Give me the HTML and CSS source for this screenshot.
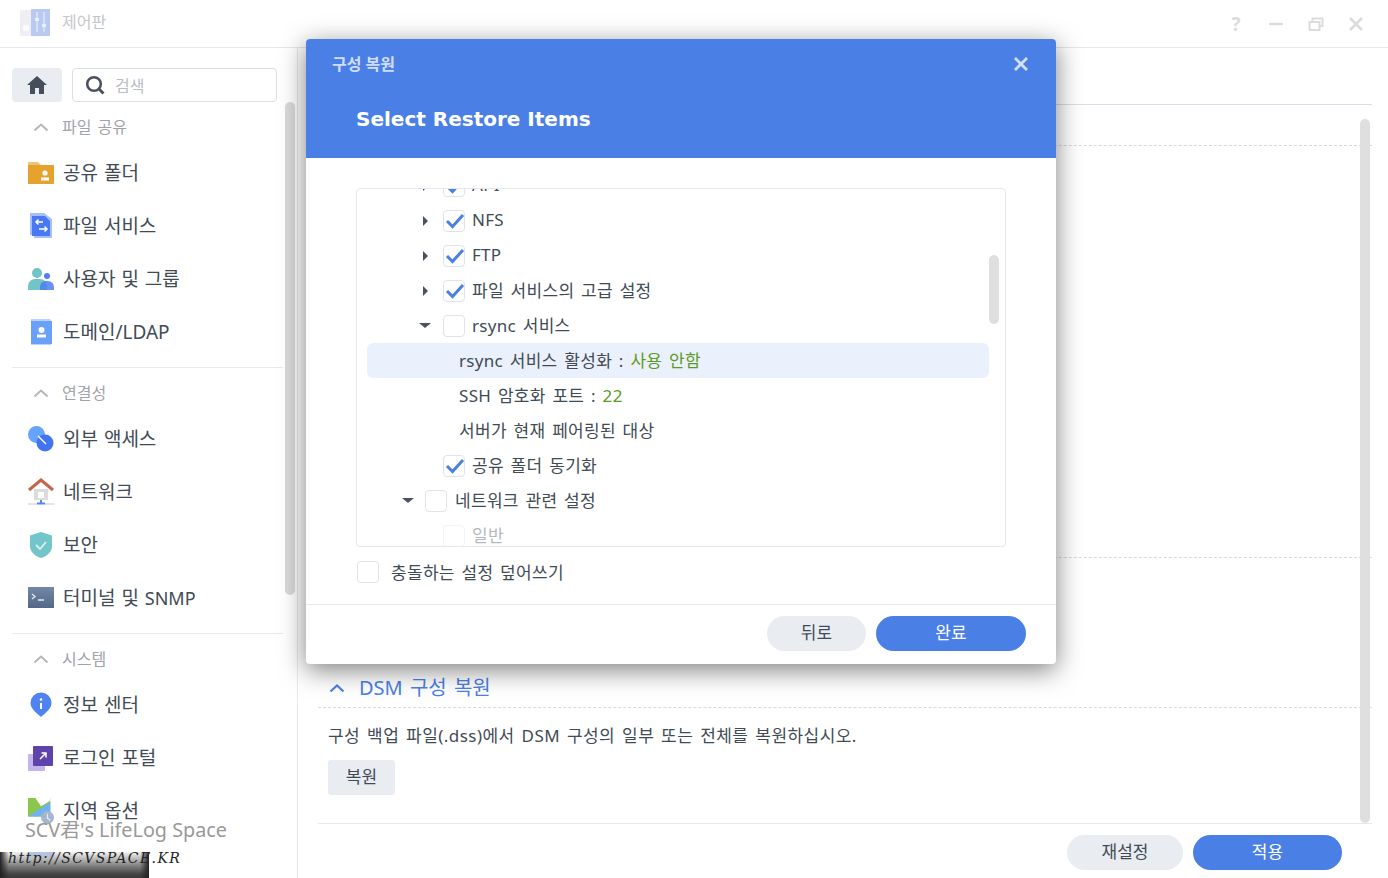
FILE: index.html
```html
<!DOCTYPE html>
<html lang="ko">
<head>
  <meta charset="UTF-8" />
  <title>제어판</title>
  <link rel="stylesheet" href="styles.css">
</head>
<body>
  <div class="app">
    <header class="titlebar">
      <svg class="app-icon" width="30" height="28" viewBox="0 0 30 28">
        <rect x="0" y="1" width="13" height="26" rx="2" fill="#eeeef3"/>
        <rect x="11" y="0" width="19" height="27" rx="1" fill="#b9c9f1"/>
        <circle cx="6" cy="19" r="3.5" fill="#fafafa"/>
        <path d="M17 3v20M24 3v20" stroke="#dfe6f8" stroke-width="1.5"/>
        <rect x="15" y="9" width="4" height="3" fill="#e8eefb"/>
        <rect x="22" y="15" width="4" height="3" fill="#e8eefb"/>
      </svg>
      <span class="app-title">제어판</span>
      <div class="win-btns">
        <span class="win-help">?</span>
        <svg width="16" height="16" viewBox="0 0 16 16"><path d="M1 8h14" stroke="#dcdcdc" stroke-width="2.4"/></svg>
        <svg width="16" height="16" viewBox="0 0 16 16"><path d="M1.5 6h10v8h-10zM4.5 5V2.5h10V10h-2" fill="none" stroke="#dcdcdc" stroke-width="2"/></svg>
        <svg width="16" height="16" viewBox="0 0 16 16"><path d="M2 2l12 12M14 2L2 14" stroke="#dcdcdc" stroke-width="2.6"/></svg>
      </div>
    </header>

    <div class="content">
      <aside class="sidebar">
        <div class="search-row">
          <button class="home-btn">
            <svg width="20" height="18" viewBox="0 0 20 18"><path d="M10 0L0 9h3v9h5v-6h4v6h5V9h3z" fill="#464e5c"/></svg>
          </button>
          <div class="search-box">
            <svg width="20" height="20" viewBox="0 0 20 20"><circle cx="9" cy="9" r="6.8" fill="none" stroke="#4a5260" stroke-width="2.6"/><path d="M14 14l4.5 4.5" stroke="#4a5260" stroke-width="2.8"/></svg>
            <span>검색</span>
          </div>
        </div>

        <section class="group">
          <div class="group-title">
            <svg class="chev" width="16" height="10" viewBox="0 0 16 10"><path d="M1.5 8.5L8 2.5l6.5 6" fill="none" stroke="#b4b6ba" stroke-width="2"/></svg>
            <span>파일 공유</span>
          </div>
          <div class="item">
            <svg width="26" height="24" viewBox="0 0 26 24"><path d="M0 2a1 1 0 0 1 1-1h9l3 3H0z" fill="#efc477"/><rect x="0" y="4" width="26" height="19" fill="#e5a32e"/><circle cx="17" cy="12" r="2.6" fill="#fff"/><rect x="13" y="16.500" width="8" height="3" fill="#fff"/></svg>
            <span>공유 폴더</span>
          </div>
          <div class="item">
            <svg width="26" height="26" viewBox="0 0 26 26"><path d="M2 0h14l8 6v19H6v-3H2z" fill="#a9bffb"/><path d="M4 3h13l5 5v15H4z" fill="#4878f4"/><path d="M15 9H8M10.500 6.500L8 9l2.500 2.500M11 16h8M16.500 13.500L19 16l-2.500 2.500" fill="none" stroke="#fff" stroke-width="1.5"/></svg>
            <span>파일 서비스</span>
          </div>
          <div class="item">
            <svg width="26" height="24" viewBox="0 0 26 24"><circle cx="9" cy="6" r="5" fill="#71c5c8"/><path d="M0 23v-4a7 7 0 0 1 7-7h5a7 7 0 0 1 7 7v4z" fill="#71c5c8"/><circle cx="19" cy="9" r="3" fill="#4f7ff2"/><path d="M12 23v-3a6 6 0 0 1 5-6h3a6 6 0 0 1 6 6v3z" fill="#4f7ff2" opacity=".85"/></svg>
            <span>사용자 및 그룹</span>
          </div>
          <div class="item">
            <svg width="24" height="26" viewBox="0 0 24 26"><path d="M2 0h19l1 2v24H2z" fill="#b9d1fd"/><rect x="2" y="2" width="21" height="23" fill="#69a0fa"/><circle cx="12.500" cy="11" r="3" fill="#fff"/><rect x="8" y="15.500" width="9" height="3" fill="#fff"/></svg>
            <span>도메인/LDAP</span>
          </div>
        </section>

        <section class="group">
          <div class="group-title">
            <svg class="chev" width="16" height="10" viewBox="0 0 16 10"><path d="M1.5 8.5L8 2.500l6.500 6" fill="none" stroke="#b4b6ba" stroke-width="2"/></svg>
            <span>연결성</span>
          </div>
          <div class="item">
            <svg width="26" height="26" viewBox="0 0 26 26"><circle cx="8.500" cy="8.500" r="8.500" fill="#66a3fb"/><circle cx="17" cy="17" r="8.500" fill="#4274ef"/><path d="M10 10l8 8" stroke="#fff" stroke-width="1.500"/></svg>
            <span>외부 액세스</span>
          </div>
          <div class="item">
            <svg width="26" height="28" viewBox="0 0 26 28"><rect x="6" y="11" width="14" height="11" fill="#dcdcdc"/><rect x="10" y="14" width="6" height="6" fill="#fff"/><path d="M1 12L13 2l12 10" fill="none" stroke="#c5654c" stroke-width="3"/><path d="M13 22v3" stroke="#5087f2" stroke-width="2"/><path d="M9 25.500h8" stroke="#5087f2" stroke-width="2"/><path d="M0 26h9M17 26h9" stroke="#dcdcdc" stroke-width="1.500"/></svg>
            <span>네트워크</span>
          </div>
          <div class="item">
            <svg width="24" height="26" viewBox="0 0 24 26"><path d="M12 0l11 3.500V14c0 6-5 10-11 12C6 24 1 20 1 14V3.500z" fill="#72c5c9"/><path d="M7 13l4 4 6-7" fill="none" stroke="#d9f1f1" stroke-width="1.800"/></svg>
            <span>보안</span>
          </div>
          <div class="item">
            <svg width="26" height="22" viewBox="0 0 26 22"><defs><linearGradient id="term" x1="0" y1="0" x2="0" y2="1"><stop offset="0" stop-color="#7387a6"/><stop offset="1" stop-color="#536789"/></linearGradient></defs><rect width="26" height="21" fill="url(#term)"/><path d="M4 7l3 2.500L4 12" fill="none" stroke="#e6eaf2" stroke-width="1.300"/><path d="M10 13h6" stroke="#e6eaf2" stroke-width="1.500"/></svg>
            <span>터미널 및 <b class="latin">SNMP</b></span>
          </div>
        </section>

        <section class="group">
          <div class="group-title">
            <svg class="chev" width="16" height="10" viewBox="0 0 16 10"><path d="M1.5 8.5L8 2.500l6.500 6" fill="none" stroke="#b4b6ba" stroke-width="2"/></svg>
            <span>시스템</span>
          </div>
          <div class="item">
            <svg width="26" height="26" viewBox="0 0 26 26"><path d="M13 25C9 21 2.500 17 2.500 11a10.500 10.500 0 0 1 21 0c0 6-6.500 10-10.500 14z" fill="#4f83f4"/><circle cx="13" cy="7.500" r="1.300" fill="#fff"/><path d="M13 11v6" stroke="#fff" stroke-width="2"/></svg>
            <span>정보 센터</span>
          </div>
          <div class="item">
            <svg width="26" height="26" viewBox="0 0 26 26"><rect x="0" y="9" width="17" height="17" rx="1" fill="#c3b4ef"/><rect x="5" y="1" width="20" height="20" rx="1" fill="#5f42ac"/><path d="M12 14l6-6M13.500 8H18v4.500" fill="none" stroke="#fff" stroke-width="1.500"/></svg>
            <span>로그인 포털</span>
          </div>
          <div class="item">
            <svg width="28" height="30" viewBox="0 0 28 30"><path d="M0 1h24v20H0z" fill="#8cc64a"/><path d="M8 1h16v3L14 10z" fill="#fff"/><path d="M0 21L24 5v16z" fill="#6fb2ee"/><circle cx="21" cy="22" r="7" fill="#a6b6cf"/><path d="M21 18v5l3 2" fill="none" stroke="#e8edf5" stroke-width="1.300"/></svg>
            <span>지역 옵션</span>
          </div>
          <div class="item">
            <svg width="26" height="24" viewBox="0 0 26 24"><rect width="26" height="24" rx="2" fill="#a9c5fb"/></svg>
          </div>
        </section>

        <div class="side-scroll"></div>
      </aside>

      <main class="main">
        <div class="tabbar"></div>
        <div class="panel">
          <div class="panel-scroll">
            <div class="block block-top"></div>
            <div class="block block-mid"></div>
            <div class="block block-dsm">
              <svg width="16" height="10" viewBox="0 0 16 10"><path d="M1.500 8.500L8 2.500l6.500 6" fill="none" stroke="#4a80e6" stroke-width="2.200"/></svg>
              <span>DSM 구성 복원</span>
            </div>
            <p class="desc">구성 백업 파일(.dss)에서 DSM 구성의 일부 또는 전체를 복원하십시오.</p>
            <button class="btn-small">복원</button>
          </div>
          <div class="main-scroll"></div>
        </div>
        <footer class="main-foot">
          <button class="pill pill-gray pill-reset">재설정</button>
          <button class="pill pill-blue pill-apply">적용</button>
        </footer>
      </main>
    </div>
  </div>

  <div class="dialog">
    <div class="dlg-head">
      <div class="dlg-title">구성 복원</div>
      <svg class="dlg-close" width="16" height="16" viewBox="0 0 16 16"><path d="M2 2l12 12M14 2L2 14" stroke="#d5e0f8" stroke-width="2.800"/></svg>
      <h2>Select Restore Items</h2>
    </div>
    <div class="dlg-body">
      <div class="tree">
        <div class="tree-list">
          <div class="row lv2"><i class="arrow right"></i><i class="cb"><svg width="22" height="22" viewBox="0 0 22 22"><path d="M4 11l5.500 5.500L20 5" fill="none" stroke="#4a80e6" stroke-width="3"/></svg></i><span>API</span></div>
          <div class="row lv2"><i class="arrow right"></i><i class="cb"><svg width="22" height="22" viewBox="0 0 22 22"><path d="M4 11l5.500 5.500L20 5" fill="none" stroke="#4a80e6" stroke-width="3"/></svg></i><span>NFS</span></div>
          <div class="row lv2"><i class="arrow right"></i><i class="cb"><svg width="22" height="22" viewBox="0 0 22 22"><path d="M4 11l5.500 5.500L20 5" fill="none" stroke="#4a80e6" stroke-width="3"/></svg></i><span>FTP</span></div>
          <div class="row lv2"><i class="arrow right"></i><i class="cb"><svg width="22" height="22" viewBox="0 0 22 22"><path d="M4 11l5.500 5.500L20 5" fill="none" stroke="#4a80e6" stroke-width="3"/></svg></i><span>파일 서비스의 고급 설정</span></div>
          <div class="row lv2"><i class="arrow down"></i><i class="cb"></i><span>rsync 서비스</span></div>
          <div class="row leaf active"><span>rsync 서비스 활성화 : <em>사용 안함</em></span></div>
          <div class="row leaf"><span>SSH 암호화 포트 : <em>22</em></span></div>
          <div class="row leaf"><span>서버가 현재 페어링된 대상</span></div>
          <div class="row lv2"><i class="arrow"></i><i class="cb"><svg width="22" height="22" viewBox="0 0 22 22"><path d="M4 11l5.500 5.500L20 5" fill="none" stroke="#4a80e6" stroke-width="3"/></svg></i><span>공유 폴더 동기화</span></div>
          <div class="row lv1"><i class="arrow down"></i><i class="cb"></i><span>네트워크 관련 설정</span></div>
          <div class="row lv2 dim"><i class="arrow"></i><i class="cb"></i><span>일반</span></div>
        </div>
        <div class="tree-scroll"></div>
      </div>
      <div class="overwrite"><i class="cb"></i><span>충돌하는 설정 덮어쓰기</span></div>
    </div>
    <div class="dlg-foot">
      <button class="pill pill-gray pill-back">뒤로</button>
      <button class="pill pill-blue pill-done">완료</button>
    </div>
  </div>

  <div class="watermark">
    <div class="wm-title">SCV君's LifeLog Space</div>
    <div class="wm-strip"></div>
    <div class="wm-url">http://SCVSPACE.KR</div>
  </div>
</body>
</html>
```

FILE: styles.css
```css
* {
  box-sizing: border-box;
}
html, body {
  margin: 0;
  padding: 0;
  height: 878px;
  overflow: hidden;
}
body {
  position: relative;
  background-color: #ffffff;
  color: #414b55;
  font-family: "Noto Sans", "Noto Sans CJK KR", sans-serif;
  font-size: 17px;
}
button {
  font-family: inherit;
  border: none;
  padding: 0;
}
.app {
  display: flex;
  flex-direction: column;
  height: 878px;
}

/* title bar */
.titlebar {
  display: flex;
  align-items: center;
  height: 48px;
  padding-left: 20px;
  border-bottom: 1px solid #e6e8ee;
  flex: none;
}
.app-icon {
  margin: 0 12px 2px 0;
}
.app-title {
  padding-bottom: 6px;
  font-size: 16px;
  color: #c4c6c9;
}
.win-btns {
  display: flex;
  align-items: center;
  gap: 24px;
  margin-left: auto;
  padding-right: 24px;
}
.win-help {
  width: 16px;
  text-align: center;
  font-size: 19px;
  font-weight: bold;
  line-height: 16px;
  color: #dcdcdc;
}

.content {
  display: flex;
  flex: 1;
  min-height: 0;
}

/* sidebar */
.sidebar {
  position: relative;
  width: 298px;
  flex: none;
  padding: 20px 15px 0 12px;
  border-right: 1px solid #e6e8ee;
  overflow: hidden;
}
.search-row {
  display: flex;
  gap: 10px;
  width: 265px;
  margin-bottom: 8px;
}
.home-btn {
  display: flex;
  align-items: center;
  justify-content: center;
  width: 50px;
  height: 34px;
  background-color: #e9ecf1;
  border-radius: 4px;
}
.search-box {
  display: flex;
  align-items: center;
  gap: 10px;
  width: 205px;
  height: 34px;
  padding-left: 12px;
  font-size: 16px;
  color: #b9bdc4;
  border: 1px solid #d9dfe9;
  border-radius: 4px;
}
.group {
  width: 271px;
  padding-bottom: 9px;
  border-bottom: 1px solid #e8eaee;
  margin-bottom: 8px;
}
.group-title {
  display: flex;
  align-items: center;
  height: 34px;
  margin-bottom: 2px;
  padding-left: 21px;
  font-size: 16px;
  word-spacing: 2px;
  color: #a0a4aa;
}
.group-title span {
  padding-bottom: 2px;
}
.chev {
  margin-right: 13px;
}
.item {
  display: flex;
  align-items: center;
  height: 53px;
  padding-left: 16px;
  font-size: 19px;
  word-spacing: 1px;
}
.item svg {
  width: 26px;
  flex: none;
}
.item span {
  margin-left: 9px;
  padding-bottom: 2px;
}
.latin {
  font-weight: normal;
  font-size: 18px;
}
.side-scroll {
  position: absolute;
  top: 54px;
  left: 285px;
  width: 10px;
  height: 493px;
  background-color: #d9d9d9;
  border-radius: 5px;
}

/* main panel */
.main {
  display: flex;
  flex-direction: column;
  flex: 1;
  min-width: 0;
  padding: 0 16px 0 20px;
}
.tabbar {
  height: 57px;
  flex: none;
  border-bottom: 1px solid #d8dde9;
}
.panel {
  position: relative;
  flex: 1;
  min-height: 0;
}
.block {
  border-bottom: 1px dashed #d9d9d9;
}
.block-top {
  height: 41px;
}
.block-mid {
  height: 412px;
}
.block-dsm {
  display: flex;
  align-items: center;
  height: 150px;
  padding: 110px 0 0 11px;
  font-size: 20px;
  color: #4a80e6;
}
.block-dsm span {
  margin-left: 14px;
  padding-bottom: 2px;
  word-spacing: 2px;
}
.desc {
  margin: 16px 0 12px 10px;
  line-height: 24px;
  font-size: 17px;
  letter-spacing: .45px;
  word-spacing: 2px;
}
.btn-small {
  display: block;
  width: 67px;
  height: 35px;
  margin-left: 10px;
  padding-bottom: 4px;
  font-size: 17px;
  color: #414b55;
  background-color: #e9ecf1;
  border-radius: 3px;
}
.main-scroll {
  position: absolute;
  top: 14px;
  right: 2px;
  width: 10px;
  height: 704px;
  background-color: #dfdfdf;
  border-radius: 5px;
}
.main-foot {
  display: flex;
  justify-content: flex-end;
  gap: 10px;
  height: 55px;
  flex: none;
  padding: 11px 30px 0 0;
  border-top: 1px solid #e6e8ee;
}
.pill {
  height: 35px;
  padding-bottom: 4px;
  font-size: 17px;
  border-radius: 18px;
}
.pill-gray {
  background-color: #e9ecf1;
  color: #414b55;
}
.pill-blue {
  background-color: #4a80e6;
  color: #ffffff;
}
.pill-reset { width: 116px; }
.pill-apply { width: 149px; }
.pill-back { width: 99px; }
.pill-done { width: 150px; }

/* dialog */
.dialog {
  position: absolute;
  top: 39px;
  left: 306px;
  display: flex;
  flex-direction: column;
  width: 750px;
  height: 625px;
  background-color: #ffffff;
  border-radius: 4px;
  box-shadow: 0 6px 26px rgba(0, 0, 0, .5);
}
.dlg-head {
  position: relative;
  height: 119px;
  flex: none;
  padding: 13px 0 0 26px;
  background-color: #4a80e6;
  border-radius: 4px 4px 0 0;
}
.dlg-title {
  line-height: 24px;
  font-size: 16px;
  font-weight: bold;
  color: #d0ddf8;
}
.dlg-close {
  position: absolute;
  top: 17px;
  right: 27px;
}
.dlg-head h2 {
  margin: 28px 0 0 24px;
  line-height: 30px;
  font-family: "DejaVu Sans", sans-serif;
  font-size: 20px;
  font-weight: bold;
  color: #ffffff;
}
.dlg-body {
  flex: 1;
  padding: 30px 50px 0;
}
.tree {
  position: relative;
  height: 359px;
  border: 1px solid #e4e7ef;
  border-radius: 4px;
  overflow: hidden;
}
.tree-list {
  margin-top: -21px;
}
.row {
  display: flex;
  align-items: center;
  height: 35px;
  margin-left: 10px;
  width: 622px;
  letter-spacing: .3px;
  word-spacing: 2px;
}
.row span {
  padding-bottom: 2px;
}
.lv2 { padding-left: 51px; }
.lv1 { padding-left: 34px; }
.lv1 .arrow { margin-right: 10px; }
.lv1 .cb { margin-right: 8px; }
.leaf {
  padding-left: 92px;
}
.active {
  background-color: #eaf0fc;
  border-radius: 6px;
}
.row em {
  font-style: normal;
  color: #5d9a1f;
}
.dim {
  opacity: .4;
}
.arrow {
  position: relative;
  width: 14px;
  height: 14px;
  flex: none;
  margin-right: 11px;
}
.arrow::after {
  content: "";
  position: absolute;
  width: 0;
  height: 0;
}
.arrow.right::after {
  top: 2px;
  left: 5px;
  border-left: 5px solid #4a5260;
  border-top: 5px solid transparent;
  border-bottom: 5px solid transparent;
}
.arrow.down::after {
  top: 4px;
  left: 1px;
  border-top: 5px solid #4a5260;
  border-left: 6px solid transparent;
  border-right: 6px solid transparent;
}
.cb {
  position: relative;
  display: block;
  width: 22px;
  height: 22px;
  flex: none;
  margin-right: 7px;
  background-color: #ffffff;
  border: 1px solid #dfe3ec;
  border-radius: 4px;
}
.cb svg {
  position: absolute;
  top: -1px;
  left: -1px;
}
.tree-scroll {
  position: absolute;
  top: 66px;
  right: 6px;
  width: 10px;
  height: 69px;
  background-color: #dfdfdf;
  border-radius: 5px;
}
.overwrite {
  display: flex;
  align-items: center;
  height: 22px;
  margin: 14px 0 0 1px;
  letter-spacing: .3px;
  word-spacing: 2px;
}
.overwrite span {
  margin-left: 5px;
  padding-bottom: 2px;
}
.dlg-foot {
  display: flex;
  justify-content: flex-end;
  gap: 10px;
  height: 60px;
  flex: none;
  padding: 11px 30px 0 0;
  border-top: 1px solid #e4e7ef;
}

/* watermark */
.watermark {
  position: absolute;
  left: 0;
  bottom: 0;
  width: 240px;
  height: 62px;
}
.wm-title {
  margin-left: 25px;
  line-height: 28px;
  font-size: 19.8px;
  color: #999999;
  white-space: nowrap;
}
.wm-strip {
  position: absolute;
  left: 0;
  bottom: 0;
  width: 149px;
  height: 26px;
  background:
    linear-gradient(to right, #222222, rgba(34, 34, 34, 0) 6%, rgba(34, 34, 34, 0) 94%, #222222),
    linear-gradient(to bottom, rgba(200, 200, 200, .2), #bdbdbd 25%, #7c7c7c 55%, #444444 85%, #3a3a3a);
}
.wm-url {
  position: absolute;
  left: 8px;
  bottom: 12px;
  font-family: "DejaVu Serif", serif;
  font-style: italic;
  font-size: 14px;
  line-height: 16px;
  letter-spacing: 1.4px;
  color: #222222;
  white-space: nowrap;
}
```
